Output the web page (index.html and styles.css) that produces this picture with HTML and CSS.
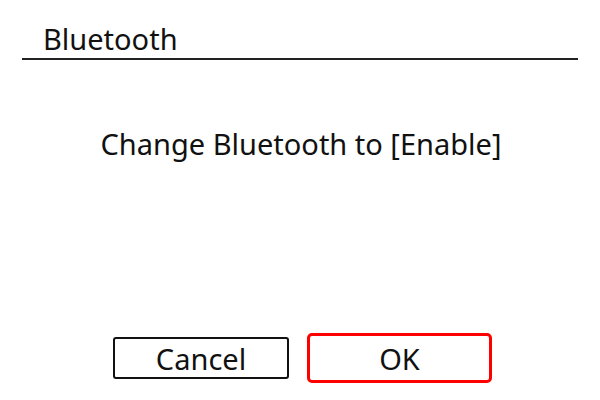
FILE: index.html
```html
<!DOCTYPE html>
<html lang="en">
<head>
    <meta charset="UTF-8">
    <meta name="viewport" content="width=device-width, initial-scale=1.0">
    <title>Bluetooth</title>
    <link rel="stylesheet" href="styles.css">
</head>
<body>
    <div class="screen">
        <div class="header">
            <h1>Bluetooth</h1>
        </div>
        <p class="message">Change Bluetooth to [Enable]</p>
        <div class="buttons">
            <button class="btn btn-cancel">Cancel</button>
            <button class="btn btn-ok">OK</button>
        </div>
    </div>
</body>
</html>
```

FILE: styles.css
```css
body {
    margin: 0;
    background-color: #fff;
    font-family: "Noto Sans", "Open Sans", sans-serif;
    color: #111;
}
.screen {
    width: 600px;
    height: 400px;
    display: flex;
    flex-direction: column;
}
.header {
    margin: 0 22px;
    padding: 20px 0 0 21px;
    height: 38px;
    border-bottom: 2px solid #222;
    box-sizing: content-box;
}
h1 {
    margin: 0;
    font-size: 29px;
    font-weight: normal;
    line-height: 38px;
}
.message {
    margin: 64px 0 0;
    padding-left: 2px;
    font-size: 29px;
    line-height: 40px;
    text-align: center;
}
.buttons {
    margin-top: auto;
    margin-bottom: 17px;
    display: flex;
    justify-content: center;
    align-items: center;
    gap: 18px;
    padding-left: 5px;
}
.btn {
    font-family: inherit;
    font-size: 29px;
    color: #111;
    background: #fff;
    padding: 0;
    box-sizing: border-box;
}
.btn-cancel {
    width: 176px;
    height: 42px;
    border: 2px solid #111;
    border-radius: 3px;
}
.btn-ok {
    width: 185px;
    height: 50px;
    border: 3px solid #f00;
    border-radius: 5px;
}
```
